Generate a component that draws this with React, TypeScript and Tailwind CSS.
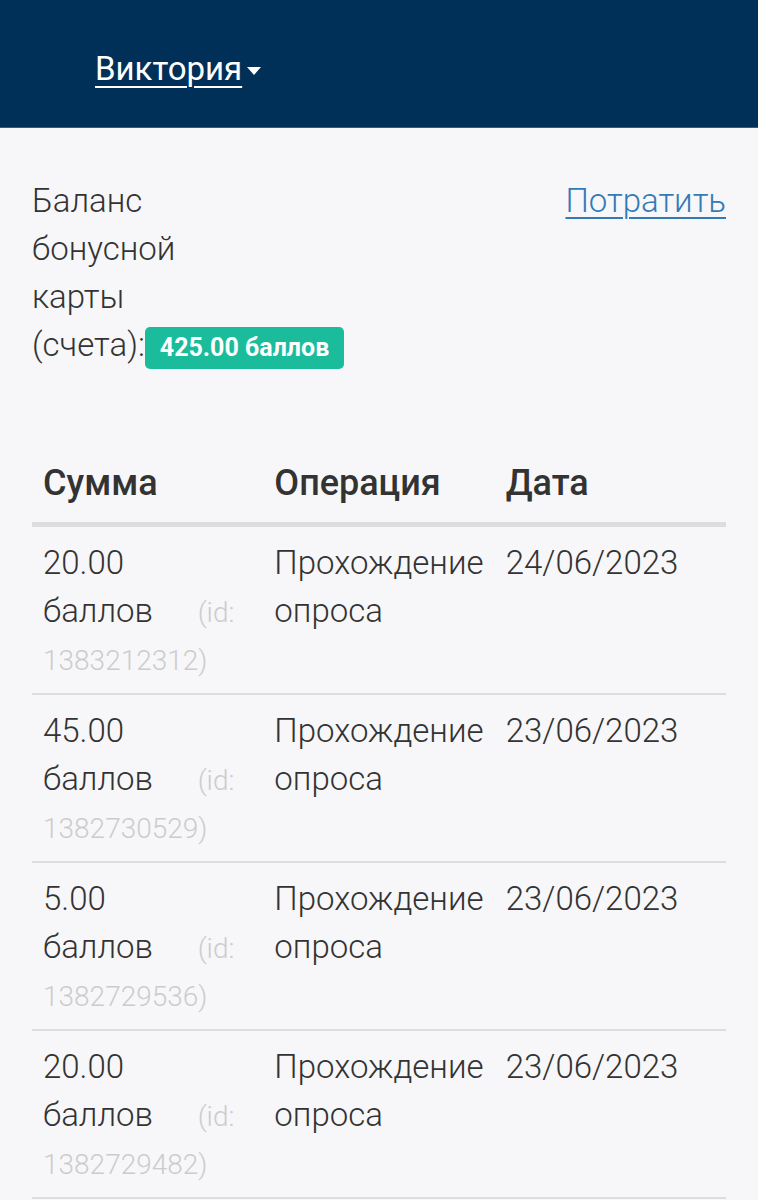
import React from "react";

type Row = { amount: string; id: string; operation: string; date: string };

const rows: Row[] = [
  { amount: "20.00", id: "1383212312", operation: "Прохождение опроса", date: "24/06/2023" },
  { amount: "45.00", id: "1382730529", operation: "Прохождение опроса", date: "23/06/2023" },
  { amount: "5.00", id: "1382729536", operation: "Прохождение опроса", date: "23/06/2023" },
  { amount: "20.00", id: "1382729482", operation: "Прохождение опроса", date: "23/06/2023" },
];

export default function App() {
  return (
    <div className="min-h-[1200px] bg-[#f7f7f9] font-['Roboto',sans-serif] text-[#333]">
      <header className="flex h-[128px] items-center border-b border-[#2f5d86] bg-[#003057] pl-[95px] pt-[10px]">
        <a href="#" className="flex items-center text-[33px] leading-none text-white">
          <span className="underline decoration-[2px] underline-offset-[6px]">Виктория</span>
          <span className="ml-[5px] mt-[4px] h-0 w-0 border-x-[7px] border-t-[8px] border-x-transparent border-t-white" />
        </a>
      </header>

      <main className="px-8">
        <section className="mt-[49px] flex items-start justify-between">
          <div className="w-[180px] text-[33px] font-light leading-[48px] text-[#333]">
            Баланс бонусной карты{" "}
            <span className="whitespace-nowrap">
              (счета):
              <span className="inline-block rounded-[5px] bg-[#1abc9c] px-[15px] text-[25px] font-bold leading-[42px] text-white">
                425.00 баллов
              </span>
            </span>
          </div>
          <a href="#" className="text-[33px] font-light leading-[48px] text-[#337ab7] underline decoration-[2px] underline-offset-[5px]">
            Потратить
          </a>
        </section>

        <table className="mt-[90px] w-full table-fixed border-collapse">
          <thead>
            <tr className="border-b-[5px] border-[#dddddd]">
              <th className="px-[11px] pb-[15px] text-left text-[36px] font-medium leading-[48px] text-[#333]">Сумма</th>
              <th className="px-[11px] pb-[15px] text-left text-[36px] font-medium leading-[48px] text-[#333]">Операция</th>
              <th className="px-[11px] pb-[15px] text-left text-[36px] font-medium leading-[48px] text-[#333]">Дата</th>
            </tr>
          </thead>
          <tbody>
            {rows.map((r) => (
              <tr key={r.id} className="border-b-2 border-[#dddddd] align-top">
                <td className="pl-[11px] pr-[29px] pt-[12px] pb-[10px] text-justify text-[33px] font-light leading-[48px]">
                  {r.amount}
                  <br />
                  баллов <small className="text-[28px] leading-none text-[#cccccc]">(id: {r.id})</small>
                </td>
                <td className="pl-[11px] pr-[29px] pt-[12px] pb-[10px] text-[33px] font-light leading-[48px]">{r.operation}</td>
                <td className="px-[11px] pt-[12px] pb-[10px] text-[33px] font-light leading-[48px]">{r.date}</td>
              </tr>
            ))}
          </tbody>
        </table>
      </main>
    </div>
  );
}
